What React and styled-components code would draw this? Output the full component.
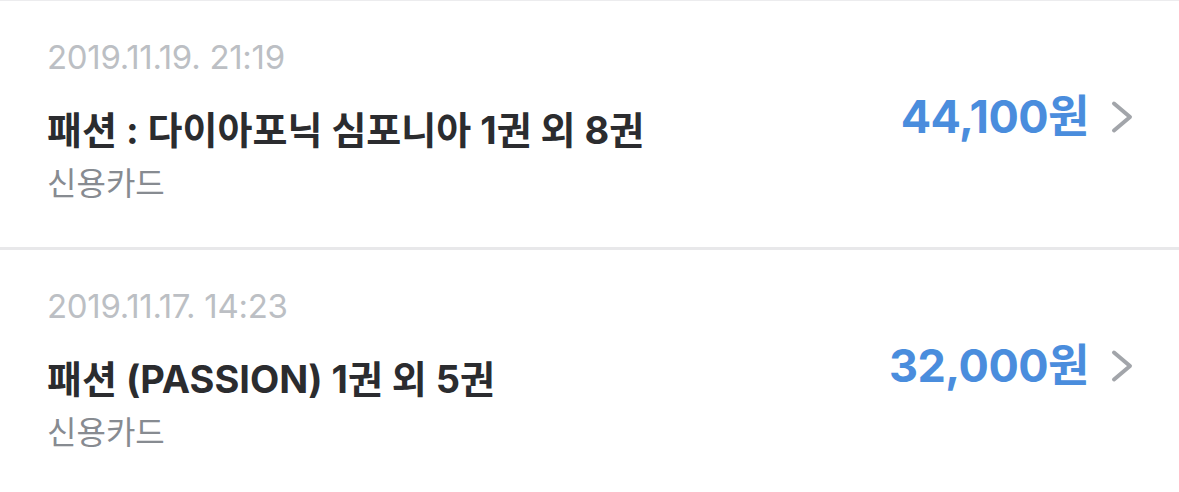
import React from "react";
import styled, { createGlobalStyle } from "styled-components";

const GlobalStyle = createGlobalStyle`
  html, body {
    margin: 0;
    padding: 0;
    background: #ffffff;
  }
  body {
    font-family: Inter, "Noto Sans CJK KR", sans-serif;
  }
`;

const List = styled.ul`
  list-style: none;
  margin: 0;
  padding: 0;
  border-top: 1px solid #ececee;
`;

const Item = styled.li`
  display: flex;
  align-items: center;
  justify-content: space-between;
  padding: 36px 46px 43px 47px;
  border-top: ${(props) => (props.first ? "none" : "3px solid #e8e8ea")};
`;

const Info = styled.div`
  display: flex;
  flex-direction: column;
`;

const DateText = styled.span`
  font-size: 33px;
  line-height: 40px;
  color: #bcbfc4;
  letter-spacing: -0.3px;
`;

const Title = styled.span`
  margin-top: 29px;
  font-size: 38px;
  line-height: 48px;
  font-weight: 700;
  color: #2b2c2f;
  letter-spacing: 0;
`;

const Method = styled.span`
  margin-top: 10px;
  font-size: 32px;
  line-height: 40px;
  color: #878b91;
`;

const PriceBox = styled.div`
  display: flex;
  align-items: center;
  gap: 20px;
  margin-top: -8px;
`;

const Price = styled.span`
  font-size: 45px;
  line-height: 56px;
  font-weight: 700;
  color: #4a8ddd;
  letter-spacing: -0.5px;
`;

const Chevron = () => (
  <svg width="24" height="34" viewBox="0 0 24 34" fill="none">
    <path
      d="M5 3.5 L21 17 L5 30.5"
      stroke="#a2a5aa"
      strokeWidth="4"
      strokeLinecap="round"
      strokeLinejoin="round"
    />
  </svg>
);

const orders = [
  {
    date: "2019.11.19. 21:19",
    title: "패션 : 다이아포닉 심포니아 1권 외 8권",
    method: "신용카드",
    price: "44,100원",
  },
  {
    date: "2019.11.17. 14:23",
    title: "패션 (PASSION) 1권 외 5권",
    method: "신용카드",
    price: "32,000원",
  },
];

export default function App() {
  return (
    <>
      <GlobalStyle />
      <List>
        {orders.map((order, i) => (
          <Item key={order.date} first={i === 0}>
            <Info>
              <DateText>{order.date}</DateText>
              <Title>{order.title}</Title>
              <Method>{order.method}</Method>
            </Info>
            <PriceBox>
              <Price>{order.price}</Price>
              <Chevron />
            </PriceBox>
          </Item>
        ))}
      </List>
    </>
  );
}
